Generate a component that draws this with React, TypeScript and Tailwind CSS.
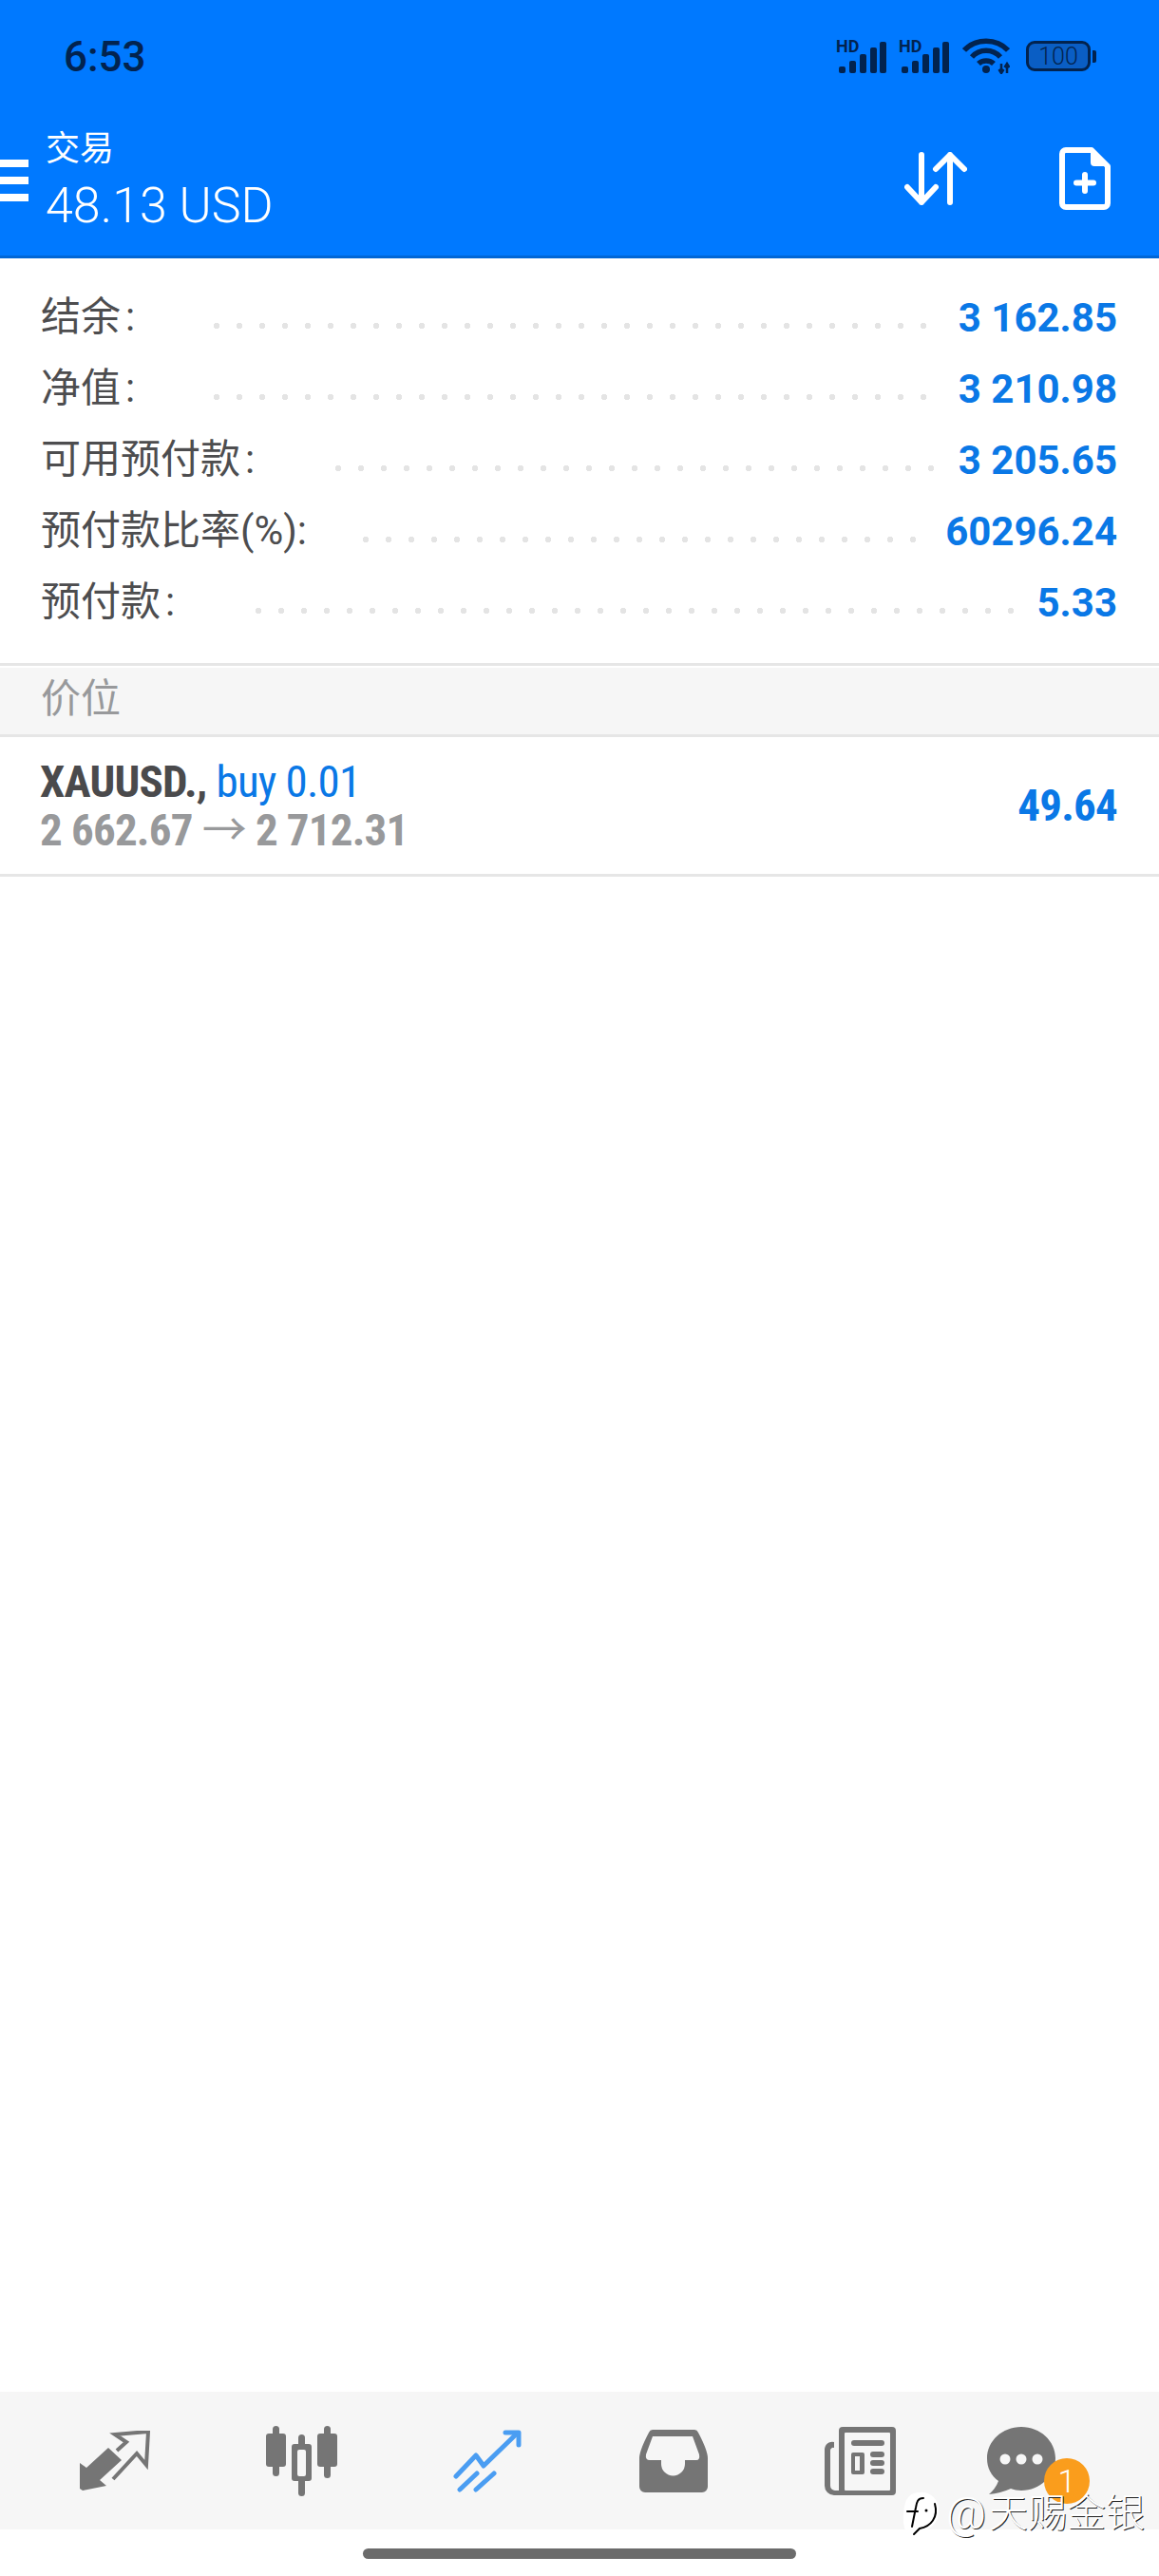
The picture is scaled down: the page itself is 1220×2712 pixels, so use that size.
import React from 'react';

const CONDENSED = "font-['Roboto_Condensed','Roboto','Noto_Sans_CJK_SC',sans-serif]";
const DARK = '#02234f';

const rows = [
  { label: '结余', colon: true, value: '3 162.85', dots: 'ml-[74px] mr-[28px]' },
  { label: '净值', colon: true, value: '3 210.98', dots: 'ml-[74px] mr-[28px]' },
  { label: '可用预付款', colon: true, value: '3 205.65', dots: 'ml-[76px] mr-[21px]' },
  { label: '预付款比率(%):', colon: false, value: '60296.24', dots: 'ml-[50px] mr-[23px]' },
  { label: '预付款', colon: true, value: '5.33', dots: 'ml-[76px] mr-[20px]' },
];

function Signal() {
  return (
    <div className="relative w-[55px] h-[35px]">
      <span className="absolute left-[2px] top-[0px] text-[18px] leading-[14px] font-bold text-[#02234f]">HD</span>
      <svg className="absolute left-0 top-0" width="55" height="35" viewBox="0 0 55 35" fill={DARK}>
        <rect x="5" y="28" width="7" height="7" rx="2" />
        <rect x="16" y="22" width="7" height="13" rx="2" />
        <rect x="27" y="15" width="7" height="20" rx="2" />
        <rect x="38" y="8" width="7" height="27" rx="2" />
        <rect x="48" y="2" width="7" height="33" rx="2" />
      </svg>
    </div>
  );
}

function StatusIcons() {
  return (
    <div className="flex items-center pt-[2px]">
      <Signal />
      <div className="w-[11px]" />
      <Signal />
      <svg className="ml-[14px]" width="50" height="38" viewBox="0 0 50 38" fill="none" stroke={DARK} strokeWidth="5.5">
        <path d="M2 13C14 0 36 0 48 13" />
        <path d="M10 20C18 11 32 11 40 20" />
        <path d="M17 27C21 23 29 23 33 27" />
        <circle cx="25" cy="33" r="4" fill={DARK} stroke="none" />
        <path d="M41 27V37M47 27V37M38.5 33L41 37L43.5 33M44.5 31L47 27L49.5 31" strokeWidth="2.5" />
      </svg>
      <div className="ml-[17px] w-[68px] h-[32px] border-[3px] border-[#02234f] rounded-[9px] bg-[#0a5ec4] flex items-center justify-center text-[25px] leading-none font-light text-[#02234f]">
        100
      </div>
      <div className="ml-[2px] w-[4px] h-[13px] bg-[#02234f] rounded-r-[2px]" />
    </div>
  );
}

function TabIcon({ children }: { children: React.ReactNode }) {
  return <div className="w-[196px] flex justify-center items-center">{children}</div>;
}

export default function App() {
  return (
    <div className="relative w-[1220px] h-[2712px] bg-white flex flex-col overflow-hidden font-['Roboto','Noto_Sans_CJK_SC',sans-serif]">
      <header className="h-[272px] shrink-0 bg-[#0079ff] border-b-[3px] border-[#0066d6] flex flex-col">
        <div className="h-[132px] flex pt-[38px] pl-[67px] pr-[66px] justify-between items-start">
          <span className="text-[44px] leading-[44px] font-medium text-[#02234f]">6:53</span>
          <StatusIcons />
        </div>
        <div className="flex items-center justify-between">
          <div className="flex items-center">
            <div className="flex flex-col gap-[10px] w-[30px]">
              <div className="h-[8px] bg-white" />
              <div className="h-[8px] bg-white" />
              <div className="h-[8px] bg-white" />
            </div>
            <div className="ml-[18px] flex flex-col text-white">
              <span className="text-[36px] leading-[44px] mt-[3px]">交易</span>
              <span className="text-[52px] leading-[62px] font-light mt-[7px]">48.13 USD</span>
            </div>
          </div>
          <div className="flex items-center pr-[51px] mb-[4px]">
            <svg width="66" height="56" viewBox="0 0 66 56" fill="none" stroke="white" strokeWidth="6" strokeLinecap="round" strokeLinejoin="round">
              <path d="M18 3V53M3 37L18 53L33 37" />
              <path d="M48 3V53M33 18L48 3L63 18" />
            </svg>
            <svg className="ml-[97px]" width="54" height="66" viewBox="0 0 54 66" fill="none">
              <path d="M3 7a4 4 0 0 1 4-4H34L51 20V59a4 4 0 0 1-4 4H7a4 4 0 0 1-4-4Z" stroke="white" strokeWidth="6" strokeLinejoin="round" />
              <path d="M33 3L51 20H37a4 4 0 0 1-4-4Z" fill="white" />
              <path d="M27 29V46M18 37.5H36" stroke="white" strokeWidth="6" strokeLinecap="round" />
            </svg>
          </div>
        </div>
      </header>

      <section className="pt-[24px] pb-[27px]">
        {rows.map((row) => (
          <div key={row.label} className="h-[75px] flex items-center pl-[43px] pr-[44px]">
            <span className="text-[42px] leading-[48px] text-[#4d4d4f] whitespace-nowrap">
              {row.label}
              {row.colon && <span className="ml-[5px]">:</span>}
            </span>
            <div className={`flex-1 h-[8px] mt-[18px] bg-[radial-gradient(circle,#e4e4e4_3px,transparent_3.5px)] bg-[length:24px_8px] ${row.dots}`} />
            <span className="text-[42px] leading-[44px] pt-[2px] font-bold text-[#0a78e6] whitespace-nowrap">{row.value}</span>
          </div>
        ))}
      </section>

      <div className="h-[78px] shrink-0 border-y-[3px] border-[#e6e6e6] pt-[2px]">
        <div className="h-full bg-[#f6f6f6] flex items-center pl-[43px] pb-[5px] text-[42px] text-[#98999b]">价位</div>
      </div>

      <div className={`h-[147px] shrink-0 border-b-[3px] border-[#e6e6e6] flex items-center justify-between pl-[42px] pr-[44px] tracking-[-0.8px] ${CONDENSED}`}>
        <div className="flex flex-col">
          <span className="text-[47px] leading-[51px] whitespace-nowrap">
            <span className="font-bold text-[#4a4a4c]">XAUUSD.,</span>{' '}
            <span className="text-[#0a78e6]">buy 0.01</span>
          </span>
          <span className="text-[47px] leading-[51px] font-bold text-[#98999b] whitespace-nowrap">
            2 662.67 <span className="font-normal">→</span> 2 712.31
          </span>
        </div>
        <span className="text-[47px] font-bold text-[#0a78e6]">49.64</span>
      </div>

      <div className="flex-1" />

      <nav className="h-[145px] shrink-0 bg-[#f6f6f6] flex items-center pl-[23px]">
        <TabIcon>
          <svg width="74" height="64" viewBox="0 0 74 64" fill="none">
            <path d="M0 34L7 39L30 18L44 31L21 52L28 58L3 63L0 61Z" fill="#757575" />
            <path d="M39 21L49 12L37 4L72 1L70 36L60 24L35 51" stroke="#757575" strokeWidth="4" />
          </svg>
        </TabIcon>
        <TabIcon>
          <svg width="75" height="74" viewBox="0 0 75 74" fill="#757575">
            <rect x="0" y="8" width="21" height="35" rx="3" />
            <rect x="7" y="0" width="7" height="53" rx="3.5" />
            <rect x="27" y="19" width="21" height="39" rx="3" />
            <rect x="34" y="9" width="7" height="65" rx="3.5" />
            <rect x="33" y="25" width="9" height="28" rx="2" fill="#f6f6f6" />
            <rect x="54" y="8" width="21" height="35" rx="3" />
            <rect x="61" y="0" width="7" height="55" rx="3.5" />
          </svg>
        </TabIcon>
        <TabIcon>
          <svg width="72" height="66" viewBox="0 0 72 66" fill="none" stroke="#4a9df2" strokeWidth="5" strokeLinecap="round" strokeLinejoin="round">
            <path d="M3 49L24 27L32 38L65 6" />
            <path d="M55 3H69V16" />
            <path d="M7 63L25 46M24 63L43 46" />
          </svg>
        </TabIcon>
        <TabIcon>
          <svg width="72" height="66" viewBox="0 0 72 66">
            <path d="M15 0H57a5 5 0 0 1 5 3Q72 22 72 30V60a6 6 0 0 1-6 6H6a6 6 0 0 1-6-6V30Q0 22 10 3a5 5 0 0 1 5-3Z" fill="#757575" />
            <path d="M14 7H56L63 26Q64 32 60 32H48V36A12 12 0 0 1 23 36V32H11Q6 32 7 26Z" fill="#f6f6f6" />
          </svg>
        </TabIcon>
        <TabIcon>
          <svg width="75" height="72" viewBox="0 0 75 72">
            <path d="M19 0H71a4 4 0 0 1 4 4V68a4 4 0 0 1-4 4H10a10 10 0 0 1-10-10V24a8 8 0 0 1 10-8V22a3 3 0 0 0-4 3V62a5 5 0 0 0 5 5H15V4a4 4 0 0 1 4-4Z" fill="#757575" />
            <rect x="21" y="6" width="48" height="61" rx="1" fill="#f6f6f6" />
            <rect x="28" y="14" width="35" height="6" rx="3" fill="#757575" />
            <rect x="28" y="27" width="14" height="23" rx="2" fill="#757575" />
            <rect x="32" y="31" width="5" height="15" fill="#f6f6f6" />
            <rect x="48" y="26" width="15" height="6" rx="3" fill="#757575" />
            <rect x="48" y="35" width="15" height="6" rx="3" fill="#757575" />
            <rect x="48" y="44" width="15" height="6" rx="3" fill="#757575" />
          </svg>
        </TabIcon>
        <TabIcon>
          <div className="relative w-[72px] h-[71px] mr-[52px]">
            <svg width="72" height="71" viewBox="0 0 72 71">
              <path d="M36 0C56 0 72 15 72 33S56 67 36 67C32 67 28 66 25 65Q14 70 2 71Q9 65 12 57C4 51 0 43 0 33C0 15 16 0 36 0Z" fill="#757575" />
              <circle cx="19" cy="34" r="5.5" fill="#f6f6f6" />
              <circle cx="36" cy="34" r="5.5" fill="#f6f6f6" />
              <circle cx="53" cy="34" r="5.5" fill="#f6f6f6" />
            </svg>
            <div className="absolute left-[60px] top-[33px] w-[48px] h-[48px] rounded-full bg-[#fa9d1c] text-white text-[34px] font-light flex items-center justify-center">
              1
            </div>
          </div>
        </TabIcon>
      </nav>

      <div className="h-[49px] shrink-0 flex justify-center pt-[20px]">
        <div className="w-[456px] h-[11px] bg-[#6b6b6b] rounded-full" />
      </div>

      <div className="absolute left-[950px] top-[2622px] flex items-center text-[41px] leading-[44px] text-white [text-shadow:1px_1px_0_#222] whitespace-nowrap">
        <svg width="40" height="48" viewBox="0 0 40 48" fill="none">
          <path d="M18 2a18 18 0 0 1 20 20c0 12-8 18-18 22-8 2-14 2-17-2C0 36 0 20 4 10 8 4 12 2 18 2Z" fill="white" />
          <path d="M22 8C16 8 15 12 14 18L10 38M5 22H16" stroke="black" strokeWidth="2" strokeLinecap="round" />
          <path d="M34 14C38 28 30 38 18 40L12 46" stroke="black" strokeWidth="2" strokeLinecap="round" />
          <circle cx="25" cy="21" r="1.5" fill="black" />
        </svg>
        <span className="ml-[6px] text-[46px] font-light">@</span>
        <span className="ml-[3px] font-light">天赐金银</span>
      </div>
    </div>
  );
}
